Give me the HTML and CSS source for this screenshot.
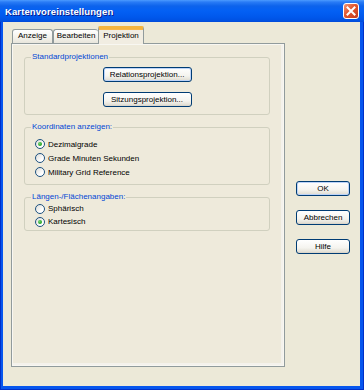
FILE: index.html
```html
<!DOCTYPE html>
<html lang="de">
<head>
<meta charset="utf-8">
<title>Kartenvoreinstellungen</title>
<link rel="stylesheet" href="styles.css">
</head>
<body>
<div class="window">
  <div class="titlebar">
    <span class="title">Kartenvoreinstellungen</span>
    <span class="close">
      <svg width="16" height="16" viewBox="0 0 16 16">
        <defs>
          <linearGradient id="cg" x1="0" y1="0" x2="1" y2="1">
            <stop offset="0" stop-color="#F29A7C"/>
            <stop offset="0.45" stop-color="#E2562F"/>
            <stop offset="1" stop-color="#C1381A"/>
          </linearGradient>
        </defs>
        <rect x="0.5" y="0.5" width="15" height="15" rx="2.5" fill="url(#cg)" stroke="#FFFFFF"/>
        <path d="M4.5 4.5 L11.5 11.5 M11.5 4.5 L4.5 11.5" stroke="#FFFFFF" stroke-width="2" stroke-linecap="square"/>
      </svg>
    </span>
  </div>
  <div class="client">
    <div class="tabarea">
      <div class="tabs">
        <div class="tab t1">Anzeige</div>
        <div class="tab t2">Bearbeiten</div>
        <div class="tab t3 active">Projektion</div>
      </div>
      <div class="panel">
        <fieldset class="group g1">
          <legend>Standardprojektionen</legend>
          <button class="btn wide focus">Relationsprojektion...</button>
          <button class="btn wide">Sitzungsprojektion...</button>
        </fieldset>
        <fieldset class="group g2">
          <legend>Koordinaten anzeigen:</legend>
          <div class="radio-row row14"><span class="radio checked"></span><span>Dezimalgrade</span></div>
          <div class="radio-row row14"><span class="radio"></span><span>Grade Minuten Sekunden</span></div>
          <div class="radio-row row14"><span class="radio"></span><span>Military Grid Reference</span></div>
        </fieldset>
        <fieldset class="group g3">
          <legend>Längen-/Flächenangaben:</legend>
          <div class="radio-row row13"><span class="radio"></span><span>Sphärisch</span></div>
          <div class="radio-row row13"><span class="radio checked"></span><span>Kartesisch</span></div>
        </fieldset>
      </div>
    </div>
    <div class="side">
      <button class="btn side-btn focus">OK</button>
      <button class="btn side-btn">Abbrechen</button>
      <button class="btn side-btn">Hilfe</button>
    </div>
  </div>
</div>
</body>
</html>
```

FILE: styles.css
```css
* { box-sizing: border-box; }
html, body { margin: 0; padding: 0; }
body {
  font-family: "Liberation Sans", Arial, sans-serif;
  font-size: 8px;
  color: #000;
  background: #ECE9D8;
}
.window {
  width: 364px;
  height: 390px;
  display: flex;
  flex-direction: column;
  background: #0656EE;
  box-shadow: inset 1px 0 0 #0030C8, inset -1px 0 0 #0030C8, inset 0 -1px 0 #0030C8;
}
.titlebar {
  height: 22px;
  flex: none;
  display: flex;
  align-items: center;
  justify-content: space-between;
  padding: 1px 5px 0 5px;
  background: linear-gradient(to bottom, #4C9BFF 0px, #2A7CF6 2px, #0D63EC 6px, #0360F4 11px, #0058EC 17px, #0050E1 21px, #0348D6 22px);
}
.title {
  color: #FFFFFF;
  font-weight: bold;
  font-size: 9.5px;
  letter-spacing: 0.1px;
  text-shadow: 1px 1px 0 #0A1C8C;
}
.close {
  display: flex;
  width: 16px;
  height: 16px;
  margin-top: -1px;
}
.client {
  flex: 1;
  margin: 0 4px 4px 3px;
  background: #ECE9D8;
  display: flex;
  padding: 4px 0 19px 8px;
}
.tabarea {
  width: 274px;
  display: flex;
  flex-direction: column;
}
.tabs {
  display: flex;
  align-items: flex-end;
  padding-left: 1px;
  height: 17px;
  flex: none;
}
.tab {
  height: 14px;
  border: 1px solid #919B9C;
  border-bottom: none;
  border-radius: 3px 3px 0 0;
  background: linear-gradient(to bottom, #FFFFFF, #F3F1EA 60%, #E8E6DC);
  text-align: center;
  line-height: 12px;
  white-space: nowrap;
}
.t1 { width: 41px; }
.t2 { width: 45px; border-right: none; }
.t3 { width: 46px; }
.tab.active {
  height: 18px;
  margin-bottom: -1px;
  position: relative;
  z-index: 1;
  border-top: 3px solid #F5B43C;
  box-shadow: inset 0 1px 0 #F7B64A;
  background: #F1EDE2;
  line-height: 13px;
  border-radius: 2px 2px 0 0;
}
.panel {
  flex: 1;
  border: 1px solid #919B9C;
  box-shadow: inset 0 0 0 1px #F8F7F2, inset -2px -2px 0 1px #F4F2EC;
  background: #EEEADB;
  padding: 8px 14px 0 12px;
  display: flex;
  flex-direction: column;
}
.group {
  margin: 0;
  border: 1px solid #D0D0BF;
  border-radius: 3px;
  min-width: 0;
}
.group legend {
  color: #0046D5;
  line-height: 10px;
  padding: 0 1px;
  margin-left: 6px;
}
.g1 {
  padding: 5px 0 7px 0;
  display: flex;
  flex-direction: column;
  align-items: center;
  gap: 10px;
}
.g2 {
  margin-top: 7px;
  padding: 5px 0 5px 0;
}
.g3 {
  margin-top: 7px;
  padding: 0 0 2px 0;
}
.radio-row {
  display: flex;
  align-items: center;
  gap: 3px;
  padding-left: 10px;
}
.row14 { height: 14px; }
.row13 { height: 13px; }
.radio {
  width: 10px;
  height: 10px;
  border-radius: 50%;
  border: 1px solid #1C5180;
  background: linear-gradient(135deg, #DCDCD7, #FFFFFF 70%);
  display: flex;
  align-items: center;
  justify-content: center;
  flex: none;
}
.radio.checked::after {
  content: "";
  width: 4px;
  height: 4px;
  border-radius: 50%;
  background: radial-gradient(circle at 35% 35%, #6FD46F, #21A121 70%);
}
.btn {
  font-family: "Liberation Sans", Arial, sans-serif;
  font-size: 8px;
  color: #000;
  height: 15px;
  padding: 0;
  line-height: 13px;
  border: 1px solid #003C74;
  border-radius: 3px;
  background: linear-gradient(to bottom, #FFFFFF 0%, #F5F4EF 60%, #E3E0D6 90%, #D6D0C5 100%);
  text-align: center;
  white-space: nowrap;
}
.btn.focus {
  box-shadow: inset 0 0 0 1px #BCD3F8;
}
.wide { width: 89px; }
.side {
  display: flex;
  flex-direction: column;
  gap: 14px;
  padding-top: 155px;
  margin-left: 11px;
}
.side-btn { width: 54px; }
```
